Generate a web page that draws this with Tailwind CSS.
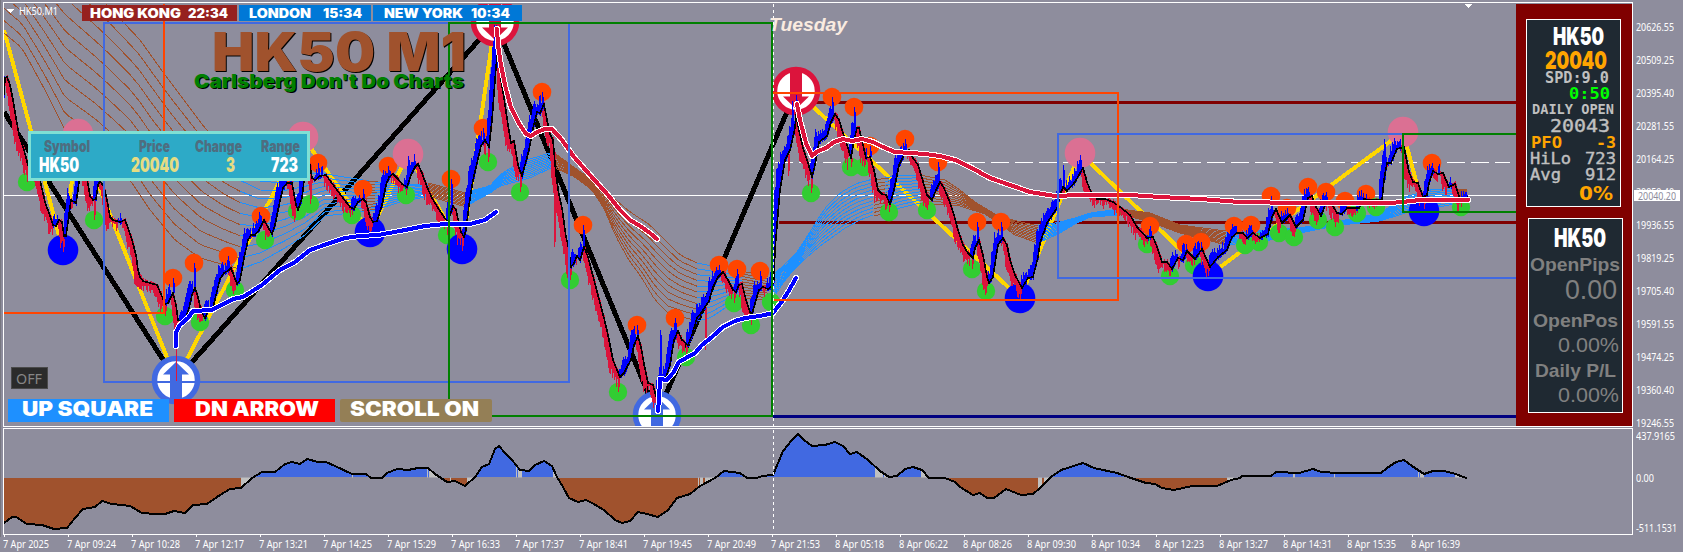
<!DOCTYPE html>
<html lang="en">
<head>
  <meta charset="UTF-8">
  <title>HK50,M1</title>
  <script src="https://cdn.jsdelivr.net/npm/@tailwindcss/browser@4"></script>
</head>
<body class="w-[1683px] h-[552px] overflow-hidden bg-[#8e8d9d] text-white font-['Noto_Sans','Liberation_Sans',sans-serif]">

  <div class="flex">
    <!-- Chart -->
    <main class="relative w-[1633px] h-[537px] shrink-0">
      <svg id="chart" class="block" width="1633" height="537" viewBox="0 0 1633 537" fill="none" shape-rendering="crispEdges">
        <defs>
          <clipPath id="main"><rect x="4" y="4" width="1512" height="422"/></clipPath>
          <clipPath id="histclip"><path id="histshape"/></clipPath>
        </defs>
        <g id="plot" clip-path="url(#main)"></g>
        <g id="hist"></g>
        <path d="M773.5 4V532" stroke="#fff" stroke-dasharray="3 3"/>
        <path d="M772 22V417" stroke="#008000" stroke-width="2"/>
        <path d="M3.5 2.5H1632.5V426.5H3.5ZM3.5 428.5H1632.5V534.5H3.5Z" stroke="#fff"/>
        <path d="M0.5 0V537" stroke="#77767f"/>
        <path d="M7 9H14L10.5 13ZM1464 4H1473L1468.5 8Z" fill="#fff"/>
      </svg>

      <span class="absolute left-[19px] top-[3px] text-[11px] leading-[15px]" data-w="39">HK50,M1</span>

      <!-- Market clocks -->
      <div class="absolute left-[82px] top-[5px] flex gap-[2px] h-4 font-['Inter'] font-black text-[13px] leading-4">
        <div class="w-[155px] bg-[#96211f] flex *:shrink-0 pl-[8px]"><span class="w-[98px]"><span data-w="91">HONG KONG</span></span><span><span data-w="40">22:34</span></span></div>
        <div class="w-[132px] bg-[#0078d7] flex *:shrink-0 pl-[10px]"><span class="w-[74px]"><span data-w="62">LONDON</span></span><span><span data-w="39">15:34</span></span></div>
        <div class="w-[149px] bg-[#0078d7] flex *:shrink-0 pl-[11px]"><span class="w-[87px]"><span data-w="79">NEW YORK</span></span><span><span data-w="39">10:34</span></span></div>
      </div>

      <!-- Title -->
      <div class="absolute left-[194px] top-[28px] font-['Inter'] font-black">
        <h1 class="pl-[18px] h-[46px] text-[53px] leading-[49px] text-[#a0522d] [text-shadow:1px_1px_#000]"><span data-w="254">HK50 M1</span></h1>
        <p class="text-[19px] leading-[15px] text-[#008000] [text-shadow:1px_1px_#000]"><span data-w="270">Carlsberg Don't Do Charts</span></p>
      </div>

      <p class="absolute left-[769px] top-[14px] font-['Liberation_Sans'] font-bold italic text-[19px] leading-[22px] text-[#faebe0]"><span data-w="78">Tuesday</span></p>

      <!-- Symbol box -->
      <div class="absolute left-[28px] top-[131px] w-[282px] h-[50px] border-3 border-[#7fe0d4] bg-[#2daac7] font-['Inter'] font-black">
        <div class="flex *:shrink-0 pt-[3px] pl-[13px] h-[21px] text-[16px] leading-[19px] text-[#4f6d80]">
          <span class="w-[95px]"><span data-w="46">Symbol</span></span>
          <span class="w-[56px]"><span data-w="31">Price</span></span>
          <span class="w-[66px]"><span data-w="47">Change</span></span>
          <span><span data-w="39">Range</span></span>
        </div>
        <div class="flex *:shrink-0 pl-[8px] text-[20px] leading-[20px]">
          <span class="w-[92px]"><span data-w="40">HK50</span></span>
          <span class="w-[95px] text-[#e6dc82]"><span data-w="48">20040</span></span>
          <span class="w-[45px] text-[#e6dc82]"><span data-w="9">3</span></span>
          <span><span data-w="27">723</span></span>
        </div>
      </div>

      <!-- Buttons -->
      <button class="absolute left-[11px] top-[367px] w-[37px] h-[22px] bg-[#2b2b2b] border border-[#4a4a4a] text-[#868686] text-[14px] leading-[19px] text-left pl-[4px]"><span data-w="26">OFF</span></button>
      <div class="absolute left-[8px] top-[399px] flex gap-[5px] font-['Inter'] font-black text-[20px] leading-[21px]">
        <button class="w-[161px] h-[23px] bg-[#1e90ff] text-left pl-[14px] pb-[2px]"><span data-w="131">UP SQUARE</span></button>
        <button class="w-[161px] h-[23px] bg-[#ff0000] text-left pl-[21px] pb-[2px]"><span data-w="124">DN ARROW</span></button>
        <button class="w-[152px] h-[23px] bg-[#947f56] text-left pl-[10px] pb-[2px] rounded-[2px]"><span data-w="129">SCROLL ON</span></button>
      </div>

      <!-- Side panels -->
      <aside class="absolute left-[1516px] top-[4px] w-[116px] h-[422px] bg-[#800000] pt-[15px] pl-[10px]">
        <div class="w-[95px] h-[188px] border border-white bg-[#1f2932] pt-[4px] font-['DejaVu_Sans_Mono'] font-bold text-[#c0c0c0]">
          <div class="h-[24px] leading-[24px] pl-[26px] font-['Inter'] font-black text-[25px] text-white"><span data-w="51">HK50</span></div>
          <div class="h-[24px] leading-[24px] pl-[18px] font-['Inter'] font-black text-[25px] text-[#ffa500]"><span data-w="62">20040</span></div>
          <div class="h-[12px] leading-[12px] pl-[18px] text-[15px]"><span data-w="64">SPD:9.0</span></div>
          <div class="h-[20px] leading-[20px] pl-[42px] text-[16px] text-[#00ff00]"><span data-w="41">0:50</span></div>
          <div class="h-[10px] leading-[10px] pl-[5px] text-[14px]"><span data-w="82">DAILY OPEN</span></div>
          <div class="h-[23px] leading-[23px] pl-[23px] text-[18px] font-normal [-webkit-text-stroke:0.4px]"><span data-w="60">20043</span></div>
          <div class="h-[12px] leading-[12px] pl-[4px] text-[16px] flex *:shrink-0 text-[#ffa500]"><span class="w-[65px]"><span data-w="31">PFO</span></span><span><span data-w="20">-3</span></span></div>
          <div class="h-[20px] leading-[20px] pl-[3px] text-[16px] flex *:shrink-0 font-normal [-webkit-text-stroke:0.4px]"><span class="w-[55px]"><span data-w="41">HiLo</span></span><span><span data-w="31">723</span></span></div>
          <div class="h-[12px] leading-[12px] pl-[3px] text-[16px] flex *:shrink-0 font-normal [-webkit-text-stroke:0.4px]"><span class="w-[55px]"><span data-w="31">Avg</span></span><span><span data-w="31">912</span></span></div>
          <div class="h-[25px] leading-[25px] pl-[52px] font-['DejaVu_Sans'] text-[19px] text-[#ffa500]"><span data-w="34">0%</span></div>
        </div>
        <div class="ml-[2px] mt-[11px] w-[95px] h-[195px] border border-white bg-[#1f2932] pt-[9px] font-['Liberation_Sans'] text-[#808080]">
          <div class="h-[19px] leading-[19px] pl-[25px] font-['Inter'] font-black text-[26px] text-white"><span data-w="52">HK50</span></div>
          <div class="mt-[11px] h-[14px] leading-[14px] pl-px font-bold text-[19px]"><span data-w="90">OpenPips</span></div>
          <div class="mt-[8px] h-[21px] leading-[21px] pl-[36px] text-[27px]"><span data-w="52">0.00</span></div>
          <div class="mt-[13px] h-[14px] leading-[14px] pl-[4px] font-bold text-[19px]"><span data-w="85">OpenPos</span></div>
          <div class="mt-[9px] h-[15px] leading-[15px] pl-[29px] text-[21px]"><span data-w="61">0.00%</span></div>
          <div class="mt-[12px] h-[14px] leading-[14px] pl-[6px] font-bold text-[19px]"><span data-w="81">Daily P/L</span></div>
          <div class="mt-[9px] h-[15px] leading-[15px] pl-[29px] text-[21px]"><span data-w="61">0.00%</span></div>
        </div>
      </aside>
    </main>

    <!-- Price axis -->
    <div class="relative w-[50px] h-[537px] text-[11px]">
      <div id="prices" class="h-[428px] pt-[17px] flex flex-col gap-[13px]"></div>
      <div class="flex flex-col pl-[3px] leading-[15px]">
        <span class="h-[16px]"><span data-w="39">437.9165</span></span>
        <span class="h-[16px] mt-[26px]"><span data-w="18">0.00</span></span>
        <span class="h-[16px] mt-[34px]"><span data-w="41">-511.1531</span></span>
      </div>
      <div class="absolute left-px top-[190px] w-[46px] h-[11px] bg-white text-[#8e8d9d] leading-[11px] pl-[4px]"><span data-w="38">20040.20</span></div>
    </div>
  </div>

  <!-- Time axis -->
  <div id="times" class="flex pl-[3px] h-[15px] text-[11px] leading-[13px]"></div>

<script>
const BLUE = '#0000ff', RED = '#dc143c', BROWN = '#a0522d', SKY = '#1e90ff', ROYAL = '#4169e1';
const plot = document.getElementById('plot');

// moving average, x,y pairs
const ma = [4,95,5,78,7,77,10,85,13,100,16,118,19,135,24,150,28,165,40,180,45,202,50,216,53,225,56,226,59,220,62,222,64,236,66,236,68,222,71,200,76,203,78,190,80,172,84,168,88,184,90,196,93,200,96,199,98,185,100,181,104,187,107,200,110,217,113,220,120,222,125,220,128,228,132,240,136,255,138,270,140,277,143,281,150,283,157,285,161,294,165,304,168,303,173,293,176,305,178,320,181,322,186,318,189,308,192,295,195,288,198,297,201,311,205,318,209,309,213,308,216,295,220,279,224,273,229,270,231,268,234,276,237,284,240,280,244,258,248,240,251,235,255,235,259,230,264,220,268,227,272,234,275,225,279,205,283,188,287,183,292,183,296,205,298,210,302,198,305,172,310,165,312,178,315,180,320,176,326,175,331,182,337,190,343,198,350,207,354,209,358,202,363,199,366,202,370,217,373,222,377,221,382,205,386,185,389,177,393,174,398,179,402,184,407,187,411,175,415,167,418,164,422,173,427,187,432,198,438,208,444,217,448,222,450,215,453,206,456,210,461,232,464,237,466,230,469,205,473,180,477,163,481,146,485,140,489,147,492,120,495,80,497,55,498,42,501,80,504,98,508,125,511,143,514,141,518,165,522,176,525,165,529,150,533,128,537,112,540,113,544,104,547,120,550,134,553,140,556,175,559,195,562,208,566,237,568,245,571,267,574,263,577,256,580,260,584,247,588,257,594,280,600,303,604,318,608,335,613,360,617,370,620,377,624,373,628,365,631,360,634,345,638,336,641,347,644,364,648,383,653,385,656,396,658,400,662,380,665,380,670,365,674,340,678,331,682,340,688,345,692,335,697,318,701,313,705,307,709,301,713,287,718,277,723,272,728,280,733,290,736,292,739,285,742,284,746,300,750,312,752,314,756,300,759,290,763,287,768,289,772,286,774,280,775,250,777,225,780,190,785,160,790,150,795,128,796,115,799,130,803,148,808,163,812,177,815,165,819,142,823,139,827,136,831,122,835,114,839,120,843,133,847,145,851,158,854,140,857,128,859,128,863,145,866,158,870,157,874,170,878,190,882,194,886,195,890,204,894,190,899,165,904,155,909,150,913,158,918,165,922,178,927,195,932,200,936,190,940,182,944,188,949,200,954,215,958,230,963,245,968,253,973,258,975,248,979,240,983,255,987,277,989,283,993,277,996,257,998,245,1003,238,1007,245,1010,260,1015,275,1022,288,1028,278,1033,277,1038,257,1040,243,1047,223,1057,208,1060,195,1063,187,1067,191,1075,182,1083,168,1087,182,1091,192,1097,199,1105,199,1113,202,1120,207,1130,215,1137,227,1147,238,1153,237,1157,247,1162,262,1167,262,1172,269,1178,258,1183,260,1187,251,1195,259,1202,249,1210,267,1218,257,1227,250,1232,237,1237,233,1243,233,1247,238,1253,233,1260,238,1268,234,1272,217,1276,209,1282,223,1290,215,1296,227,1303,220,1308,198,1312,196,1315,205,1321,216,1326,203,1331,203,1337,213,1342,214,1347,208,1359,208,1364,199,1372,200,1382,200,1384,180,1387,163,1391,163,1397,149,1404,147,1409,172,1413,182,1418,183,1423,197,1427,195,1429,183,1433,171,1438,174,1443,173,1449,187,1455,184,1458,193,1461,201,1468,197];

// fan bands: colour, upper edge, lower edge
const bands = [
  [BROWN, [4,-90,60,-40,110,8,140,40,165,75,205,128,225,148,240,158], [4,33,22,48,45,90,65,130,95,150,130,180,150,210,175,240,200,258,240,269]],
  [SKY, [240,158,260,172,285,176,320,173,375,182], [240,269,260,262,285,248,305,235,325,216,375,210]],
  [BROWN, [362,181,378,182], [362,211,378,209]],
  [SKY, [375,182,400,184,430,184], [375,210,400,202,430,196]],
  [BROWN, [428,183,466,193], [428,196,466,207]],
  [SKY, [466,192,490,186,500,175,520,162,553,152], [466,206,490,193,500,186,530,178,553,167]],
  [BROWN, [553,152,575,168,595,182,610,195,630,212,650,225,665,240,680,255,697,263], [553,167,575,177,592,190,605,210,615,235,630,262,640,275,655,300,668,313,697,321]],
  [SKY, [697,263,712,266,742,274], [697,321,710,318,725,308,742,294]],
  [BROWN, [742,271,768,277], [742,298,768,300]],
  [SKY, [772,276,795,255,810,232,825,208,840,193,855,184,873,179], [772,300,785,280,800,263,820,246,845,228,860,220,873,215]],
  [BROWN, [874,180,889,178], [874,216,889,212]],
  [SKY, [885,178,900,175,920,175], [885,214,900,208,920,203]],
  [BROWN, [920,175,945,180,960,190,975,202,1000,217,1038,226], [920,203,960,206,985,214,1000,224,1015,235,1038,243]],
  [SKY, [1038,226,1060,222,1075,218,1090,213,1120,209], [1038,243,1060,233,1075,224,1090,217,1120,215]],
  [BROWN, [1120,209,1150,213,1180,225,1226,231], [1120,214,1150,222,1180,233,1226,245]],
  [SKY, [1226,233,1300,228,1340,221,1380,213,1405,197,1430,190,1455,188], [1226,245,1270,240,1300,233,1340,225,1380,221,1405,213,1455,204]],
  [BROWN, [1455,189,1467,190], [1455,197,1467,196]]
];

const orange = [173,278,194,263,228,256,261,216,290,173,318,163,363,189,388,166,451,179,483,128,542,92,583,225,637,325,675,318,719,265,737,269,760,271,832,97,854,107,870,146,905,139,938,162,977,222,1001,222,1150,226,1186,244,1201,242,1234,226,1251,225,1271,196,1287,208,1308,187,1326,192,1345,201,1366,194,1432,163];
const green = [27,182,94,220,165,316,200,322,235,290,265,240,297,211,310,204,352,215,406,195,447,235,488,162,520,192,570,280,618,392,686,357,734,303,751,325,771,302,811,193,851,167,864,167,889,212,927,210,972,269,986,291,1147,244,1170,276,1194,265,1245,245,1259,242,1279,233,1294,237,1318,220,1335,227,1357,213,1376,207,1461,207];
const pink = [78,134,303,137,408,154,1080,153,1403,132];
const navy = [63,250,370,232,462,249,1020,298,1208,276,1424,211];

const line = (pts, color, w, extra = '') =>
  `<polyline points="${pts.join(' ')}" stroke="${color}" stroke-width="${w}" stroke-linejoin="round" ${extra}/>`;
const path = (d, color, w, extra = '') => `<path d="${d}" stroke="${color}" stroke-width="${w}" ${extra}/>`;

function pairs(a) {
  const out = [];
  for (let i = 0; i < a.length; i += 2) out.push([a[i], a[i + 1]]);
  return out;
}

function at(a, x) {
  if (x <= a[0]) return a[1];
  for (let i = 2; i < a.length; i += 2) {
    if (x <= a[i]) return a[i - 1] + (a[i + 1] - a[i - 1]) * (x - a[i - 2]) / (a[i] - a[i - 2]);
  }
  return a[a.length - 1];
}

function dots(list, color, r) {
  return pairs(list).map(([x, y]) => `<circle cx="${x}" cy="${y}" r="${r}" fill="${color}" shape-rendering="auto"/>`).join('');
}

function arrow(x, y, color, up) {
  return `<g transform="translate(${x} ${y}) scale(1 ${up ? 1 : -1})" shape-rendering="auto">
    <circle r="21.5" fill="#fff" stroke="${color}" stroke-width="5.5"/>
    <path d="M0 -18L13 -5.5H6V19H-6V-5.5H-13Z" fill="${color}"/></g>`;
}

function fan([color, top, bottom]) {
  const x0 = top[0], x1 = top[top.length - 2];
  let s = '';
  for (let k = 0; k < 11; k++) {
    const pts = [];
    for (let x = x0; ; x = Math.min(x + 5, x1)) {
      pts.push(x + ',' + (at(top, x) + (at(bottom, x) - at(top, x)) * k / 10).toFixed(1));
      if (x === x1) break;
    }
    s += line(pts, color, 1);
  }
  return s;
}

let seed = 7;
function rnd() {
  seed = (seed * 16807) % 2147483647;
  return seed / 2147483647;
}

function candles() {
  let up = '', down = '';
  for (let x = 4; x < 1468; x++) {
    const m = at(ma, x), next = at(ma, x + 4), d = next - m;
    const end = next + d * 0.25 + Math.sign(d || 1) * rnd() * 9;
    const start = m - Math.sign(d) * rnd() * 3;
    const seg = `M${x + 0.5} ${start.toFixed(1)}V${end.toFixed(1)}`;
    if (d < 0) up += seg; else down += seg;
  }
  const spike = (list, dir) => pairs(list).map(([x, y]) => `M${x + 0.5} ${y}V${at(ma, x) + dir * 2}M${x + 1.5} ${y - dir * -5}V${at(ma, x)}`).join('');
  up += spike(orange, 1) + spike([408,156,1080,155,1063,165,1384,139,496,25,796,95,660,330], 1);
  down += spike(green, -1) + spike([63,252,370,232,462,251,1020,299,1208,276,1424,209,788,176,705,350,554,247], -1);
  return path(down, RED, 1) + path(up, BLUE, 1);
}

const thick = (a, color) =>
  line(a, '#fff', 6, 'stroke-linecap="round"') + line(a, color, 4, 'stroke-linecap="round"');

plot.innerHTML =
  path('M4 195.5H1516', '#fff', 1) +
  path('M775 162.5H1510', '#fff', 1, 'stroke-dasharray="18 6"') +
  path('M806 102.5H1516M779 222.5H1516', '#800000', 3) +
  path('M773 416.5H1516', '#000080', 3) +
  line([4,112,176,380,495,22,657,415,796,91], '#000', 5) +
  line([4,30,63,250,78,134,176,380,303,137,370,232,408,154,462,249,495,22], '#ffd700', 4) +
  line([796,91,1020,298,1080,153,1208,276,1403,132,1424,211], '#ffd700', 4) +
  bands.map(fan).join('') +
  dots(orange, '#ff4500', 9.3) + dots(green, '#32cd32', 9.2) + dots(pink, '#db7093', 15.3) + dots(navy, BLUE, 15.3) +
  arrow(176, 380, ROYAL, true) + arrow(657, 415, ROYAL, true) +
  arrow(495, 22, RED, false) + arrow(796, 91, RED, false) +
  path('M176.5 346V381', RED, 1) +
  candles() +
  line(ma, '#000', 1.6) +
  thick([176,346,176,332,180,325,188,318,193,311,212,310,233,299,243,297,262,285,280,270,295,262,310,250,330,243,345,238,360,236,378,235,400,231,425,226,445,224,470,224,485,220,496,212], BLUE) +
  thick([658,411,659,400,660,379,667,380,673,373,679,362,695,353,702,345,712,337,723,327,735,321,745,318,760,316,773,313,783,300,788,292,796,278], BLUE) +
  thick([497,29,498,45,501,65,505,85,511,108,520,125,526,134,531,136,537,132,545,129,552,129,562,140,574,157,590,175,608,195,620,210,630,220,640,226,650,233,657,239], RED) +
  thick([797,104,800,120,806,143,812,156,818,151,826,148,834,142,843,139,852,141,862,139,873,142,883,147,895,152,910,153,925,154,940,156,955,160,970,167,990,178,1010,185,1030,192,1055,196,1080,195,1130,195,1160,197,1200,199,1240,202,1300,203,1390,203,1402,202,1420,200,1468,200], RED) +
  path('M104 23H569V382H104Z', ROYAL, 2) +
  path('M773 416H449V23H773', '#008000', 2) +
  path('M164 4V313H4M773 93H1118V300H773', '#ff4500', 2) +
  path('M1516 134H1058V278H1516', ROYAL, 2) +
  path('M1516 134H1403V212H1516', '#008000', 2);

// oscillator
const osc = [4,523,12,517,16,517,27,524,42,525,54,529,67,528,75,518,83,509,95,507,102,501,112,504,130,506,142,513,155,514,165,514,174,511,185,513,193,505,207,504,220,495,230,489,241,488,252,478,262,472,275,472,285,464,292,462,300,464,307,459,318,462,326,462,335,466,352,474,366,474,371,478,382,478,387,473,397,469,408,470,418,468,428,468,435,474,447,482,455,481,465,486,475,477,482,467,489,464,495,449,499,446,505,453,512,460,520,470,529,471,535,465,544,461,552,466,557,477,563,487,569,498,578,502,586,500,592,503,604,510,615,520,622,523,630,521,638,512,647,514,658,517,668,510,677,498,690,494,700,486,715,478,724,471,740,473,747,478,757,478,762,476,773,475,783,451,792,440,798,434,804,440,812,446,825,445,835,442,843,446,850,454,857,452,868,460,880,471,889,477,897,476,905,469,913,467,922,470,929,478,945,478,955,482,960,487,973,495,980,493,987,498,994,498,1006,489,1021,495,1033,494,1040,488,1051,477,1061,470,1083,463,1094,468,1117,473,1131,478,1146,483,1155,484,1162,488,1174,490,1192,486,1217,486,1231,480,1240,478,1242,476,1271,476,1276,472,1299,473,1313,469,1321,472,1338,473,1381,473,1387,468,1396,462,1404,460,1412,466,1424,474,1433,471,1444,471,1456,474,1463,477,1467,478];
document.getElementById('histshape').setAttribute('d', `M4 477.5L${osc.join(' ')}V477.5Z`);
const neutral = [241,9,352,1,427,1,429,9,450,1,467,8,516,1,518,4,553,5,698,1,700,3,705,9,875,8,884,4,921,7,1038,4,1044,7,1227,7,1293,2,1334,1,1418,1,1420,4,1455,8];
document.getElementById('hist').innerHTML =
  `<g clip-path="url(#histclip)"><rect x="4" y="430" width="1464" height="47" fill="${ROYAL}"/><rect x="4" y="478" width="1464" height="54" fill="${BROWN}"/>` +
  pairs(neutral).map(([x, w]) => `<rect x="${x}" y="430" width="${w}" height="102" fill="#c0c0c0"/>`).join('') + '</g>' +
  line(osc, '#000', 2);

// axes
const prices = ['20626.55', '20509.25', '20395.40', '20281.55', '20164.25', '20050.40', '19936.55', '19819.25', '19705.40', '19591.55', '19474.25', '19360.40', '19246.55'];
document.getElementById('prices').innerHTML = prices.map(p =>
  `<div class="flex items-center h-[20px] shrink-0 leading-[20px]"><i class="w-[2px] h-px bg-white mr-[3px]"></i><span data-w="38">${p}</span></div>`).join('');

const times = ['7 Apr 2025', '7 Apr 09:24', '7 Apr 10:28', '7 Apr 12:17', '7 Apr 13:21', '7 Apr 14:25', '7 Apr 15:29', '7 Apr 16:33', '7 Apr 17:37', '7 Apr 18:41', '7 Apr 19:45', '7 Apr 20:49', '7 Apr 21:53', '8 Apr 05:18', '8 Apr 06:22', '8 Apr 08:26', '8 Apr 09:30', '8 Apr 10:34', '8 Apr 12:23', '8 Apr 13:27', '8 Apr 14:31', '8 Apr 15:35', '8 Apr 16:39'];
document.getElementById('times').innerHTML = times.map((t, i) =>
  `<div class="w-[64px] shrink-0"><span data-w="${i ? 49 : 46}">${t}</span></div>`).join('');
document.getElementById('chart').insertAdjacentHTML('beforeend',
  path(times.map((t, i) => `M${4.5 + i * 64} 534V537`).join(''), '#fff', 1));

// squeeze each label to its column width
const fit = new ResizeObserver(entries => entries.forEach(({ target, contentRect }) => {
  if (contentRect.width) target.style.transform = `scaleX(${target.dataset.w / contentRect.width})`;
}));
document.querySelectorAll('[data-w]').forEach(el => {
  el.style.display = 'inline-block';
  el.style.whiteSpace = 'nowrap';
  el.style.transformOrigin = '0 50%';
  fit.observe(el);
});
</script>

</body>
</html>
